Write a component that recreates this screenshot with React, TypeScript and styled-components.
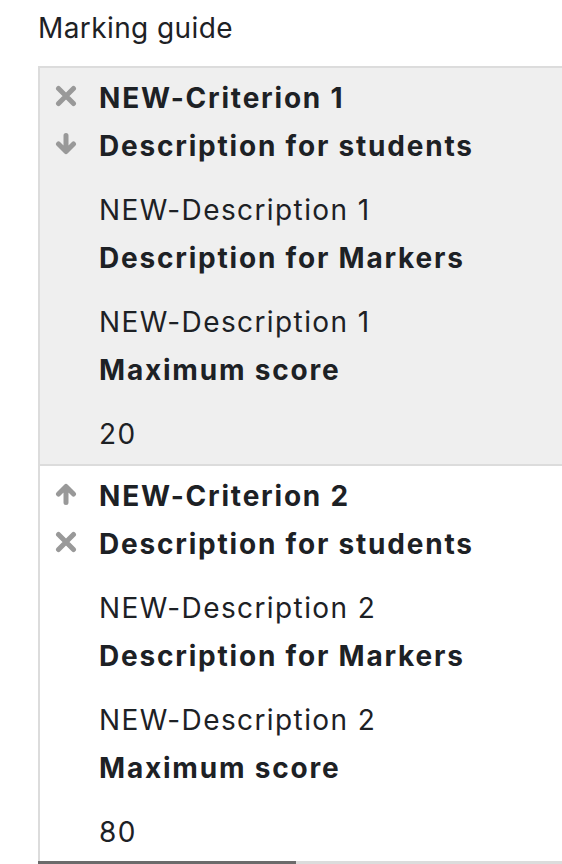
import styled, { createGlobalStyle } from "styled-components";

interface Criterion {
  id: number;
  name: string;
  studentDesc: string;
  markerDesc: string;
  maxScore: number;
  icons: ("delete" | "up" | "down")[];
  shaded: boolean;
}

const CRITERIA: Criterion[] = [
  {
    id: 1,
    name: "NEW-Criterion 1",
    studentDesc: "NEW-Description 1",
    markerDesc: "NEW-Description 1",
    maxScore: 20,
    icons: ["delete", "down"],
    shaded: true,
  },
  {
    id: 2,
    name: "NEW-Criterion 2",
    studentDesc: "NEW-Description 2",
    markerDesc: "NEW-Description 2",
    maxScore: 80,
    icons: ["up", "delete"],
    shaded: false,
  },
];

const GlobalStyle = createGlobalStyle`
  body {
    margin: 0;
    background: #fff;
    font-family: Inter, "Noto Sans", sans-serif;
    color: #1d2125;
    overflow: hidden;
  }
`;

const ICON_COLOR = "#999";

const DeleteIcon = () => (
  <svg width="22" height="22" viewBox="0 0 22 22">
    <path
      d="M3.5 3.5 L18.5 18.5 M18.5 3.5 L3.5 18.5"
      stroke={ICON_COLOR}
      strokeWidth="5"
      strokeLinecap="round"
    />
  </svg>
);

const ArrowIcon = ({ dir }: { dir: "up" | "down" }) => (
  <svg
    width="22"
    height="22"
    viewBox="0 0 22 22"
    style={{ transform: dir === "up" ? "rotate(180deg)" : undefined }}
  >
    <path
      d="M11 2.5 L11 18 M3.5 11 L11 18.5 L18.5 11"
      stroke={ICON_COLOR}
      strokeWidth="5"
      strokeLinecap="round"
      strokeLinejoin="round"
      fill="none"
    />
  </svg>
);

const App = () => {
  return (
    <Page>
      <GlobalStyle />
      <Heading>Marking guide</Heading>
      <Scroller>
        <Table>
          {CRITERIA.map((c) => (
            <Row key={c.id} $shaded={c.shaded}>
              <Controls>
                {c.icons.map((icon, i) => (
                  <IconSlot key={i}>
                    {icon === "delete" ? <DeleteIcon /> : <ArrowIcon dir={icon} />}
                  </IconSlot>
                ))}
              </Controls>
              <Content>
                <Label>{c.name}</Label>
                <Label>Description for students</Label>
                <Value>{c.studentDesc}</Value>
                <Label>Description for Markers</Label>
                <Value>{c.markerDesc}</Value>
                <Label>Maximum score</Label>
                <Value>{c.maxScore}</Value>
              </Content>
            </Row>
          ))}
        </Table>
      </Scroller>
      <ScrollTrack>
        <ScrollThumb />
      </ScrollTrack>
    </Page>
  );
};

export default App;

const Page = styled.div`
  padding: 8px 0 0 38px;
`;

const Heading = styled.div`
  font-size: 28px;
  letter-spacing: 0.4px;
  line-height: 40px;
  margin-bottom: 18px;
`;

const Scroller = styled.div`
  overflow: hidden;
`;

const Table = styled.div`
  width: 1068px;
  border-left: 2px solid #dcdcdc;
`;

const Row = styled.div<{ $shaded: boolean }>`
  display: grid;
  grid-template-columns: 59px 1fr;
  padding: 6px 0;
  border-top: 2px solid #dcdcdc;
  background: ${(p) => (p.$shaded ? "#efefef" : "#fff")};
  &:last-child {
    padding-bottom: 5px;
  }
`;

const Controls = styled.div`
  display: flex;
  flex-direction: column;
  padding-left: 15px;
`;

const IconSlot = styled.div`
  height: 48px;
  display: flex;
  align-items: center;
  padding-bottom: 4px;
  box-sizing: border-box;
`;

const Content = styled.div`
  display: flex;
  flex-direction: column;
`;

const Label = styled.div`
  font-size: 28px;
  font-weight: 700;
  letter-spacing: 1.8px;
  line-height: 48px;
`;

const Value = styled.div`
  font-size: 28px;
  letter-spacing: 1.4px;
  line-height: 48px;
  margin-top: 16px;
`;

const ScrollTrack = styled.div`
  height: 3px;
  background: #dcdcdc;
`;

const ScrollThumb = styled.div`
  width: 258px;
  height: 100%;
  background: #6b6b6b;
`;
